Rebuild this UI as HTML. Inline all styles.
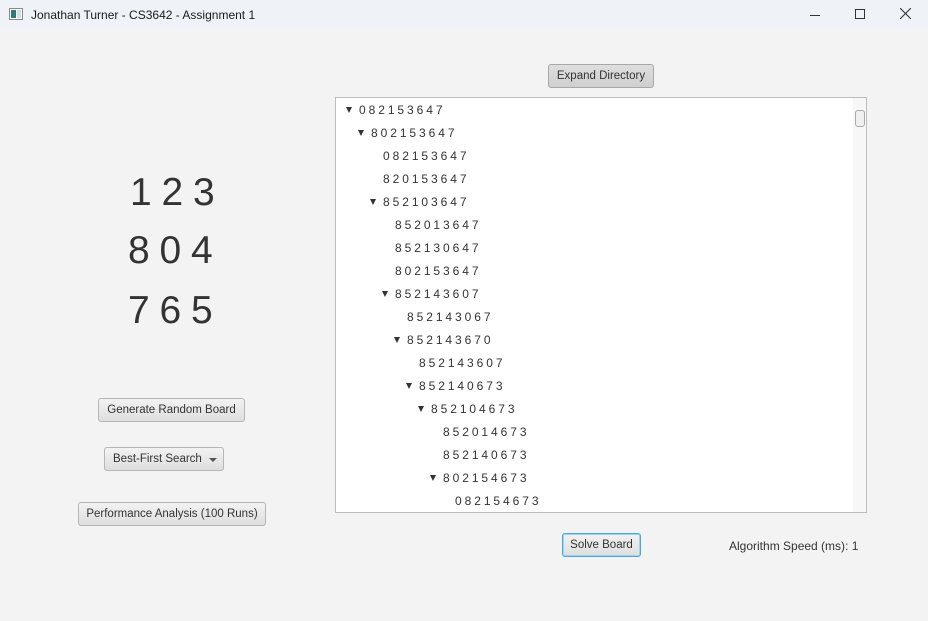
<!DOCTYPE html>
<html><head><style>
body{margin:0;width:928px;height:621px;background:#f3f3f3;font-family:"Liberation Sans",sans-serif;position:relative;overflow:hidden}
.tb{position:absolute;left:0;top:0;width:928px;height:30px;background:#eff3f8;font-size:12px;color:#1a1a1a}
.btn{position:absolute;height:24px;box-sizing:border-box;border:1px solid #b5b5b5;border-radius:3px;background:linear-gradient(#f2f2f2,#dedede);font-size:11.5px;color:#333;text-align:center;line-height:22px}
.d{position:absolute;font-size:39px;color:#333;letter-spacing:-0.5px;white-space:pre;line-height:40px}
.tree{position:absolute;left:335px;top:97px;width:532px;height:416px;box-sizing:border-box;border:1px solid #bdbdbd;background:#fff;overflow:hidden}
.r{position:absolute;font-size:12px;color:#333;white-space:pre;line-height:14px;letter-spacing:-0.2px}
.tri{position:absolute;width:0;height:0;border-left:3.5px solid transparent;border-right:3.5px solid transparent;border-top:6px solid #333}
</style></head><body>
<div class="tb">
<svg style="position:absolute;left:9px;top:8px" width="14" height="12"><rect x="0.5" y="0.5" width="13" height="11" fill="#fff" stroke="#888"/><rect x="2" y="2" width="5" height="8" fill="#2d7a7a"/><rect x="8" y="2" width="4" height="8" fill="#cfe0ef"/></svg>
<span style="position:absolute;left:31px;top:8px">Jonathan Turner - CS3642 - Assignment 1</span>
<div style="position:absolute;left:810px;top:15px;width:10px;height:1px;background:#333"></div>
<div style="position:absolute;left:855px;top:9px;width:8px;height:8px;border:1px solid #333"></div>
<svg style="position:absolute;left:900px;top:8px" width="11" height="11"><path d="M0 0L11 11M11 0L0 11" stroke="#333" stroke-width="1.1"/></svg>
</div>
<div class="d" style="left:130px;top:173px">1 2 3</div>
<div class="d" style="left:128px;top:231px">8 0 4</div>
<div class="d" style="left:128px;top:291px">7 6 5</div>
<div class="btn" style="left:98px;top:398px;width:147px">Generate Random Board</div>
<div class="btn" style="left:104px;top:447px;width:120px;text-align:left;padding-left:8px">Best-First Search<span style="position:absolute;left:104px;top:10px;border-left:4px solid transparent;border-right:4px solid transparent;border-top:4px solid #555"></span></div>
<div class="btn" style="left:78px;top:502px;width:188px">Performance Analysis (100 Runs)</div>
<div class="btn" style="left:548px;top:64px;width:106px;background:linear-gradient(#dedede,#cfcfcf);border-color:#a8a8a8">Expand Directory</div>
<div class="tree" id="t">
<div style="position:absolute;right:0;top:0;width:13px;height:414px;background:#f7f7f7">
<div style="position:absolute;left:2px;top:12px;width:8px;height:15px;border:1px solid #aaa;border-radius:3px;background:#f0f0f0"></div>
</div>
</div>
<div class="btn" style="left:562px;top:533px;width:79px;border-color:#4ba7d8;box-shadow:0 0 0 1px #9fd3ef inset">Solve Board</div>
<div style="position:absolute;left:729px;top:539px;font-size:12px;color:#333">Algorithm Speed (ms): 1</div>
<script>
var rows=[[1,"082153647",0],[1,"802153647",1],[0,"082153647",2],[0,"820153647",2],[1,"852103647",2],[0,"852013647",3],[0,"852130647",3],[0,"802153647",3],[1,"852143607",3],[0,"852143067",4],[1,"852143670",4],[0,"852143607",5],[1,"852140673",5],[1,"852104673",6],[0,"852014673",7],[0,"852140673",7],[1,"802154673",7],[0,"082154673",8]];
var t=document.getElementById('t'),h='';
rows.forEach(function(r,i){var y=5+23*i,x=23+12*r[2];
if(r[0])h+='<div class="tri" style="left:'+(x-13)+'px;top:'+(y+4)+'px"></div>';
h+='<div class="r" style="left:'+x+'px;top:'+y+'px">'+r[1].split('').join(' ')+'</div>';});
t.insertAdjacentHTML('beforeend',h);
</script>
</body></html>
